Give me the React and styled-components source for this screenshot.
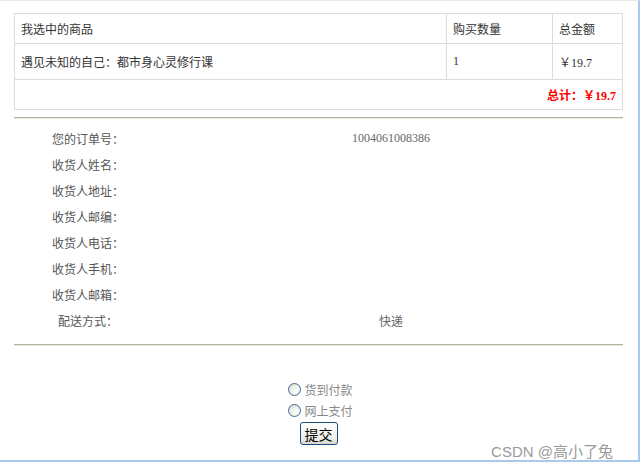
import React from "react";
import styled, { createGlobalStyle } from "styled-components";

const GlobalStyle = createGlobalStyle`
  html, body {
    margin: 0;
    padding: 0;
    background: #fff;
  }
  body {
    font-family: "Noto Sans CJK SC", "Noto Sans", sans-serif;
    font-size: 12px;
    color: #333;
  }
`;

const cart = [{ name: "遇见未知的自己：都市身心灵修行课", count: 1, price: "19.7" }];

const fields = [
  { label: "您的订单号：", value: "1004061008386", serif: true },
  { label: "收货人姓名：" },
  { label: "收货人地址：" },
  { label: "收货人邮编：" },
  { label: "收货人电话：" },
  { label: "收货人手机：" },
  { label: "收货人邮箱：" },
  { label: "配送方式：", value: "快递" },
];

const App = () => {
  return (
    <>
      <GlobalStyle />
      <Frame>
        <CartTable>
          <tbody>
            <tr>
              <Cell width={419} height={29}>我选中的商品</Cell>
              <Cell width={93} height={29}>购买数量</Cell>
              <Cell height={29}>总金额</Cell>
            </tr>
            {cart.map((item) => (
              <tr key={item.name}>
                <Cell height={35}>{item.name}</Cell>
                <Cell height={35} serif>{item.count}</Cell>
                <Cell height={35} serif>￥{item.price}</Cell>
              </tr>
            ))}
            <tr>
              <TotalCell colSpan={3}>总计：￥19.7</TotalCell>
            </tr>
          </tbody>
        </CartTable>

        <Rule />

        <FormGrid>
          {fields.map((f) => (
            <React.Fragment key={f.label}>
              <Label>{f.label}</Label>
              <Value $serif={f.serif}>{f.value}</Value>
            </React.Fragment>
          ))}
        </FormGrid>

        <Rule />

        <PayBox>
          <RadioRow>
            <Radio type="radio" name="pay" id="cod" />
            <RadioLabel htmlFor="cod">货到付款</RadioLabel>
          </RadioRow>
          <RadioRow>
            <Radio type="radio" name="pay" id="online" />
            <RadioLabel htmlFor="online">网上支付</RadioLabel>
          </RadioRow>
          <Submit type="button">提交</Submit>
        </PayBox>

        <Watermark>CSDN @高小了兔</Watermark>
      </Frame>
    </>
  );
};

export default App;

const Frame = styled.div`
  position: relative;
  box-sizing: border-box;
  width: 640px;
  height: 462px;
  border-top: 1px solid #e9e9e9;
  border-right: 2px solid #a9c8ee;
  border-bottom: 2px solid #a9c8ee;
  padding: 12px 0 0 14px;
`;

const CartTable = styled.table`
  border-collapse: collapse;
  width: 609px;
  table-layout: fixed;
  border: 1px solid #dcdcdc;
`;

const Cell = styled.td`
  border: 1px solid #dcdcdc;
  padding: 0 6px;
  height: ${(p) => p.height}px;
  width: ${(p) => (p.width ? `${p.width}px` : "auto")};
  vertical-align: middle;
  color: #333;
  font-family: ${(p) =>
    p.serif
      ? `"Liberation Serif", "Noto Sans CJK SC", serif`
      : `"Noto Sans CJK SC", sans-serif`};
`;

const TotalCell = styled.td`
  border: 1px solid #dcdcdc;
  height: 29px;
  padding: 0 6px 0 0;
  text-align: right;
  vertical-align: middle;
  color: #ff0000;
  font-weight: bold;
  font-family: "Liberation Serif", "Noto Sans CJK SC", serif;
`;

const Rule = styled.div`
  width: 609px;
  margin: 7px 0 6px;
  border-top: 1px solid #b7b29c;
  border-bottom: 1px solid #ecebe0;
`;

const FormGrid = styled.div`
  display: grid;
  grid-template-columns: 148px 458px;
  grid-auto-rows: 26px;
  margin-bottom: 11px;
`;

const Label = styled.div`
  display: flex;
  align-items: center;
  justify-content: center;
  color: #555;
`;

const Value = styled.div`
  display: flex;
  align-items: center;
  justify-content: center;
  color: #666;
  font-family: ${(p) =>
    p.$serif
      ? `"Liberation Serif", serif`
      : `"Noto Sans CJK SC", sans-serif`};
`;

const PayBox = styled.div`
  width: 609px;
  margin-top: 33px;
  display: flex;
  flex-direction: column;
  align-items: center;
`;

const RadioRow = styled.div`
  display: flex;
  align-items: center;
  height: 21px;
  padding-left: 4px;
`;

const Radio = styled.input`
  appearance: none;
  box-sizing: border-box;
  width: 13px;
  height: 13px;
  margin: 0 3px 0 0;
  border-radius: 50%;
  border: 1px solid #3f6995;
  background: radial-gradient(circle at 65% 65%, #ffffff 0%, #f2f2ee 40%, #d6d6cf 100%);
`;

const RadioLabel = styled.label`
  color: #888;
  font-size: 12px;
`;

const Submit = styled.button`
  box-sizing: border-box;
  height: 23px;
  margin-top: 1px;
  padding: 0 4px;
  font-family: "Noto Sans CJK SC", sans-serif;
  font-size: 14px;
  line-height: 1;
  color: #000;
  border: 1px solid #1f4c7f;
  border-radius: 3px;
  background: linear-gradient(#ffffff, #f0f0ea 70%, #d8d6cc);
`;

const Watermark = styled.div`
  position: absolute;
  right: 25px;
  bottom: -1px;
  font-family: "Liberation Sans", "Noto Sans CJK SC", sans-serif;
  font-size: 15px;
  color: #9a9a9a;
  text-shadow: 0 0 1px #fff;
`;
